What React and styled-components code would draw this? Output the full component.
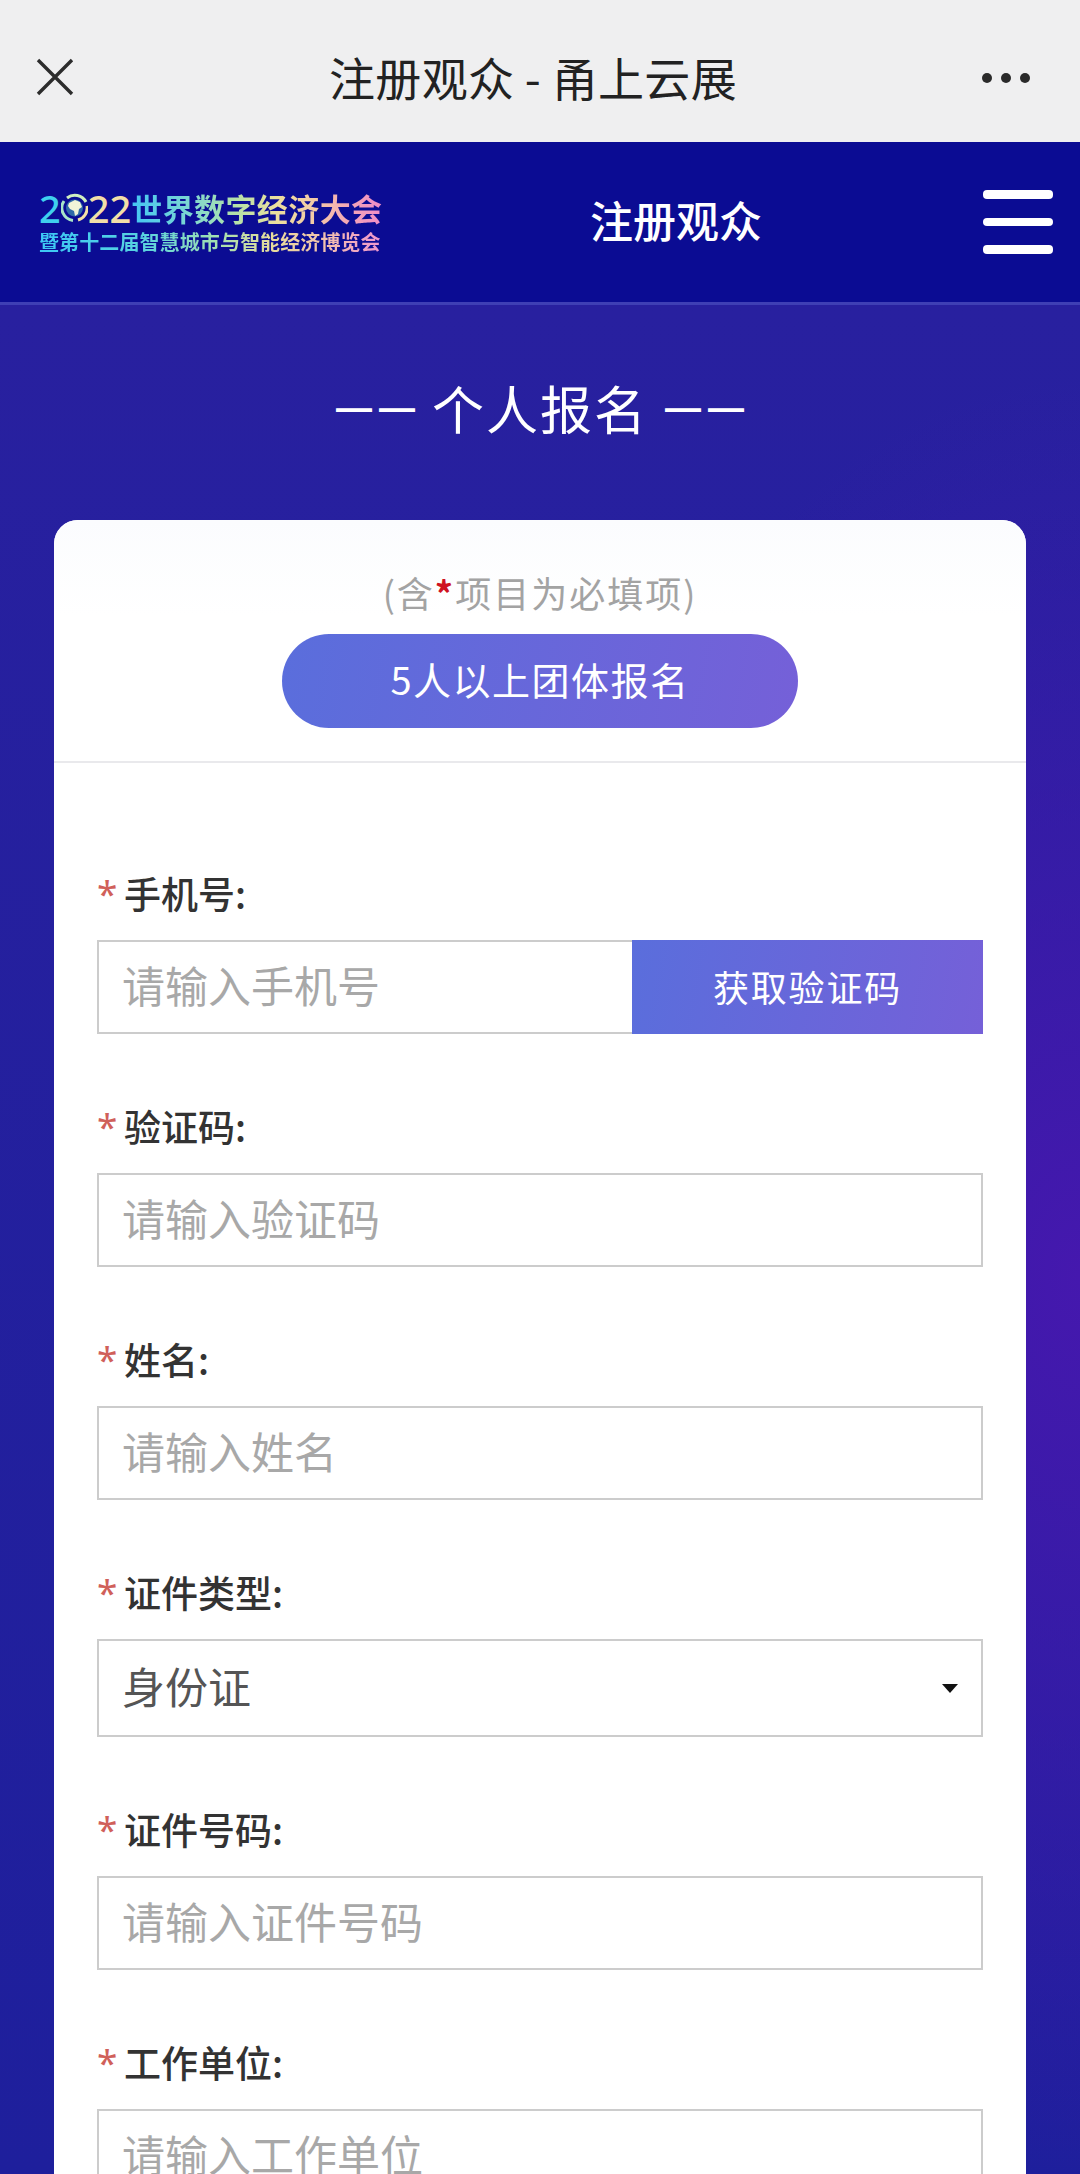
import React from 'react'
import styled, { createGlobalStyle } from 'styled-components'

const GlobalStyle = createGlobalStyle`
	html, body {
		margin: 0;
		padding: 0;
		overflow: hidden;
	}
	body {
		font-family: "Noto Sans CJK SC", "Noto Sans", sans-serif;
	}
	* {
		box-sizing: border-box;
	}
`

const Page = styled.div`
	width: 1080px;
	height: 2174px;
	overflow: hidden;
	background-color: #1f1f9c;
`

const TopBar = styled.div`
	height: 142px;
	padding: 0 50px 0 36px;
	display: grid;
	grid-template-columns: 1fr auto 1fr;
	align-items: center;
	background-color: #efeff0;
`

const CloseIcon = styled.svg`
	width: 38px;
	height: 38px;
	display: block;
	margin-top: 12px;
`

const TopTitle = styled.div`
	font-size: 46px;
	line-height: 60px;
	letter-spacing: 0.3px;
	margin-top: 9px;
	color: #222;
	white-space: nowrap;
`

const MoreDots = styled.div`
	justify-self: end;
	display: flex;
	gap: 9px;
	margin-top: 14px;
`

const Dot = styled.span`
	width: 10px;
	height: 10px;
	border-radius: 50%;
	background-color: #2a2a2a;
`

const SiteHeader = styled.header`
	height: 163px;
	padding: 0 27px 0 39px;
	display: flex;
	align-items: center;
	background-color: #0b0c93;
	border-bottom: 3px solid #3f3fb4;
`

const Logo = styled.div`
	width: 344px;
	display: flex;
	flex-direction: column;
	gap: 5px;
`

const LogoTop = styled.div`
	display: flex;
	align-items: center;
	height: 34px;
`

const LogoDigits = styled.span`
	font-family: "Noto Sans", sans-serif;
	font-size: 38px;
	line-height: 34px;
	font-weight: 500;
	color: ${props => props.$color};
`

const LogoName = styled.span`
	font-size: 31px;
	line-height: 34px;
	letter-spacing: 0.4px;
	font-weight: 700;
	white-space: nowrap;
	color: transparent;
	background: linear-gradient(90deg, #43c6f4 0%, #79d6d4 22%, #b5e2a8 42%, #ecdf9e 58%, #f3c8a8 74%, #f4a4b8 88%, #ee8cc8 100%);
	background-clip: text;
	-webkit-background-clip: text;
`

const LogoSub = styled.div`
	font-size: 20px;
	line-height: 24px;
	letter-spacing: 0.1px;
	font-weight: 700;
	white-space: nowrap;
	color: transparent;
	background: linear-gradient(90deg, #3cc8f6 0%, #58d2e0 30%, #a4e0b0 52%, #e8dc9c 68%, #f2bfb0 84%, #ee94d0 100%);
	background-clip: text;
	-webkit-background-clip: text;
`

const HeaderTitle = styled.div`
	flex: 1;
	padding-right: 14px;
	margin-bottom: 6px;
	text-align: center;
	font-size: 43px;
	line-height: 56px;
	font-weight: 500;
	color: #fff;
`

const Burger = styled.div`
	width: 70px;
	display: flex;
	flex-direction: column;
	gap: 19px;
`

const BurgerBar = styled.span`
	height: 8.5px;
	border-radius: 4px;
	background-color: #fff;
`

const Main = styled.main`
	height: 1869px;
	padding: 67px 54px 0;
	background:
		radial-gradient(ellipse 560px 900px at 100% 52%, #4518ae 0%, rgba(69, 24, 174, 0) 100%),
		linear-gradient(180deg, #28209f 0%, #1e1f9c 100%);
`

const Heading = styled.h2`
	margin: 0 0 76px;
	display: flex;
	justify-content: center;
	align-items: center;
	gap: 17px;
	font-size: 52px;
	line-height: 72px;
	font-weight: 400;
	letter-spacing: 2px;
	color: #fff;
`

const HeadingDash = styled.span`
	font-family: "Liberation Sans", sans-serif;
	font-size: 36px;
	font-weight: 700;
	letter-spacing: 7px;
	margin-right: -7px;
`

const Card = styled.section`
	background-color: #fff;
	border-radius: 24px 24px 0 0;
	min-height: 1700px;
`

const CardHead = styled.div`
	padding: 47px 0 33px;
	display: flex;
	flex-direction: column;
	align-items: center;
	border-bottom: 2px solid #e9e9ec;
	border-radius: 24px 24px 0 0;
	background: linear-gradient(180deg, #fbfcfe 0%, #fff 40%);
`

const Note = styled.p`
	margin: 0;
	font-size: 36px;
	line-height: 50px;
	letter-spacing: 2px;
	color: #a3a3a3;
`

const NoteStar = styled.span`
	color: #cf1322;
	font-weight: 700;
`

const GroupButton = styled.button`
	margin-top: 17px;
	width: 516px;
	height: 94px;
	padding: 0 0 5px;
	border: 0;
	border-radius: 47px;
	font-family: inherit;
	font-size: 38px;
	letter-spacing: 1.5px;
	color: #fff;
	background: linear-gradient(100deg, #5a6edc 0%, #7560d8 100%);
`

const Form = styled.form`
	padding: 111px 43px 0;
	display: flex;
	flex-direction: column;
	gap: 73px;
`

const Field = styled.div`
	display: flex;
	flex-direction: column;
`

const Label = styled.label`
	height: 44px;
	margin-bottom: 22px;
	padding-bottom: 6px;
	display: flex;
	align-items: center;
	font-size: 37px;
	line-height: 38px;
	font-weight: 500;
	color: #333;
`

const Star = styled.span`
	width: 27px;
	color: #d0605a;
	font-family: "Noto Sans", sans-serif;
	font-weight: 400;
`

const InputBox = styled.div`
	height: ${props => (props.$tall ? '98px' : '94px')};
	display: flex;
	align-items: stretch;
	background-color: #fff;
	border: 2px solid #cccccc;
`

const TextInput = styled.input`
	flex: 1;
	min-width: 0;
	padding: 0 0 6px 23px;
	border: 0;
	outline: 0;
	background: transparent;
	font-family: inherit;
	font-size: 43px;
	color: #555;

	&::placeholder {
		color: #a8a8a8;
		opacity: 1;
	}
`

const SelectInput = styled.select`
	flex: 1;
	min-width: 0;
	padding: 0 0 6px 23px;
	border: 0;
	outline: 0;
	appearance: none;
	background: transparent;
	font-family: inherit;
	font-size: 43px;
	color: #555;
`

const Caret = styled.svg`
	width: 16px;
	height: 9px;
	align-self: center;
	margin: 0 23px 0 0;
	flex: none;
`

const CodeButton = styled.button`
	width: 351px;
	margin: -2px -2px -2px 0;
	padding: 0 0 3px;
	border: 0;
	font-family: inherit;
	font-size: 36px;
	letter-spacing: 1.8px;
	color: #fff;
	background: linear-gradient(100deg, #5a6edc 0%, #7560d8 100%);
`

const fields = [
	{ label: '手机号', placeholder: '请输入手机号', code: true },
	{ label: '验证码', placeholder: '请输入验证码' },
	{ label: '姓名', placeholder: '请输入姓名' },
	{ label: '证件类型', select: '身份证' },
	{ label: '证件号码', placeholder: '请输入证件号码' },
	{ label: '工作单位', placeholder: '请输入工作单位' },
]

function Globe() {
	return (
		<svg width="27" height="30" viewBox="0 0 27 30" role="img" aria-label="0" style={{ flex: 'none' }}>
			<path d="M6 5A12.5 12.5 0 0 1 25 9" fill="none" stroke="#cfeec0" strokeWidth="3" />
			<path d="M26 13A12.5 12.5 0 0 1 17 27" fill="none" stroke="#f4e2a6" strokeWidth="3" />
			<path d="M12 27.4A12.5 12.5 0 0 1 3 8" fill="none" stroke="#a8e6c8" strokeWidth="3" />
			<circle cx="13.5" cy="15" r="8.5" fill="#2f6aa8" />
			<path d="M8 10l6-3 5 2 2 5-3 2-1 5-3 2-1-5-4-2-2-3z" fill="#f0f4d8" />
		</svg>
	)
}

function FieldControl({ field }) {
	if (field.select) {
		return (
			<InputBox $tall>
				<SelectInput defaultValue={field.select}>
					<option>{field.select}</option>
				</SelectInput>
				<Caret viewBox="0 0 16 9">
					<path d="M0 0h16L8 9z" fill="#111" />
				</Caret>
			</InputBox>
		)
	}
	return (
		<InputBox>
			<TextInput placeholder={field.placeholder} />
			{field.code && <CodeButton type="button">获取验证码</CodeButton>}
		</InputBox>
	)
}

export default function App() {
	return (
		<Page>
			<GlobalStyle />
			<TopBar>
				<CloseIcon viewBox="0 0 38 38">
					<path d="M2 2l34 34M36 2L2 36" stroke="#2c2c2c" strokeWidth="3.4" fill="none" />
				</CloseIcon>
				<TopTitle>注册观众 - 甬上云展</TopTitle>
				<MoreDots>
					<Dot />
					<Dot />
					<Dot />
				</MoreDots>
			</TopBar>
			<SiteHeader>
				<Logo>
					<LogoTop>
						<LogoDigits $color="#3fd0ee">2</LogoDigits>
						<Globe />
						<LogoDigits $color="#f2dfa8">22</LogoDigits>
						<LogoName>世界数字经济大会</LogoName>
					</LogoTop>
					<LogoSub>暨第十二届智慧城市与智能经济博览会</LogoSub>
				</Logo>
				<HeaderTitle>注册观众</HeaderTitle>
				<Burger>
					<BurgerBar />
					<BurgerBar />
					<BurgerBar />
				</Burger>
			</SiteHeader>
			<Main>
				<Heading>
					<HeadingDash>——</HeadingDash>
					<span>个人报名</span>
					<HeadingDash>——</HeadingDash>
				</Heading>
				<Card>
					<CardHead>
						<Note>
							(含<NoteStar>*</NoteStar>项目为必填项)
						</Note>
						<GroupButton type="button">5人以上团体报名</GroupButton>
					</CardHead>
					<Form>
						{fields.map(field => (
							<Field key={field.label}>
								<Label>
									<Star>*</Star>
									{field.label}:
								</Label>
								<FieldControl field={field} />
							</Field>
						))}
					</Form>
				</Card>
			</Main>
		</Page>
	)
}
